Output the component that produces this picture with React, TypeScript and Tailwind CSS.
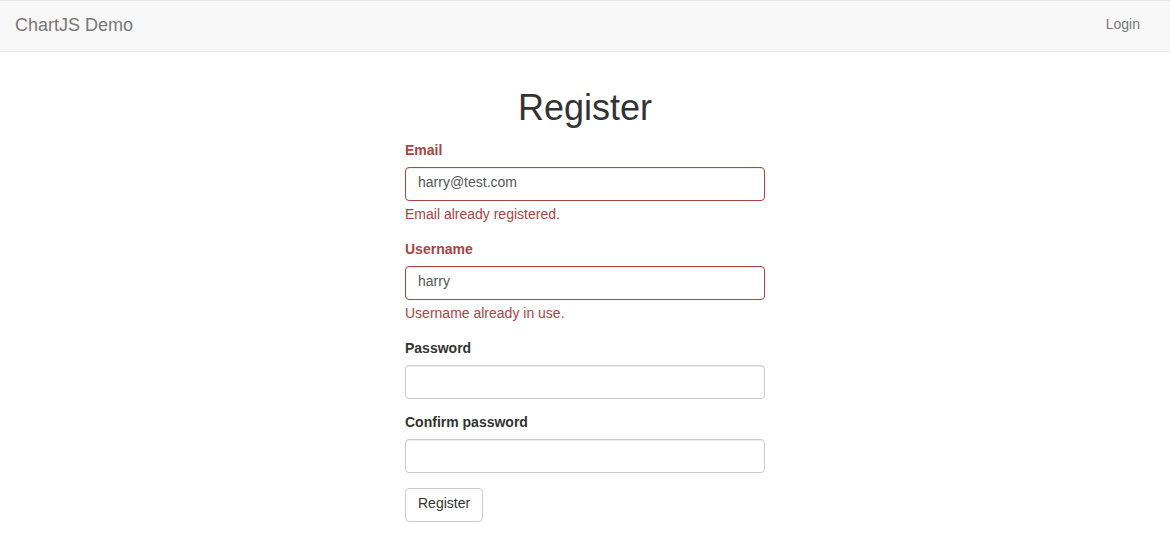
import React from 'react';

const fieldBase =
  'block h-[34px] w-full rounded-[4px] border bg-white px-3 pt-1 pb-2 text-[14px] leading-5 text-[#555] shadow-[inset_0_1px_1px_rgba(0,0,0,0.075)] outline-none';

function Field({
  label,
  type = 'text',
  value,
  error,
}: {
  label: string;
  type?: string;
  value?: string;
  error?: string;
}) {
  return (
    <div className="mb-[15px]">
      <label
        className={`mb-[5px] block pb-1 text-[14px] font-bold leading-4 ${error ? 'text-[#a94442]' : 'text-[#333]'}`}
      >
        {label}
      </label>
      <input
        type={type}
        defaultValue={value}
        className={`${fieldBase} ${error ? 'border-[#a94442]' : 'border-[#ccc]'}`}
      />
      {error && <p className="mt-[5px] pb-1 text-[14px] leading-4 text-[#a94442]">{error}</p>}
    </div>
  );
}

export default function App() {
  return (
    <div className="min-h-screen bg-white font-['Liberation_Sans',Arial,sans-serif] text-[14px] leading-5 text-[#333]">
      <nav className="flex h-[52px] items-stretch justify-between border-y border-[#e7e7e7] bg-[#f8f8f8]">
        <a href="#" className="px-[15px] pb-[15px] pt-[14px] text-[18px] leading-5 text-[#777]">
          ChartJS Demo
        </a>
        <a href="#" className="mr-[15px] px-[15px] pb-[17px] pt-[13px] text-[14px] leading-5 text-[#777]">
          Login
        </a>
      </nav>

      <div className="mx-auto w-[360px] pt-9">
        <h1 className="mb-2.5 pb-1 text-center text-[36px] font-normal leading-[1.1]">Register</h1>
        <form>
          <Field label="Email" value="harry@test.com" error="Email already registered." />
          <Field label="Username" value="harry" error="Username already in use." />
          <Field label="Password" type="password" />
          <Field label="Confirm password" type="password" />
          <button
            type="button"
            className="h-[34px] rounded-[4px] border border-[#ccc] bg-white px-3 pb-2 pt-1 text-[14px] leading-5 text-[#333]"
          >
            Register
          </button>
        </form>
      </div>
    </div>
  );
}
